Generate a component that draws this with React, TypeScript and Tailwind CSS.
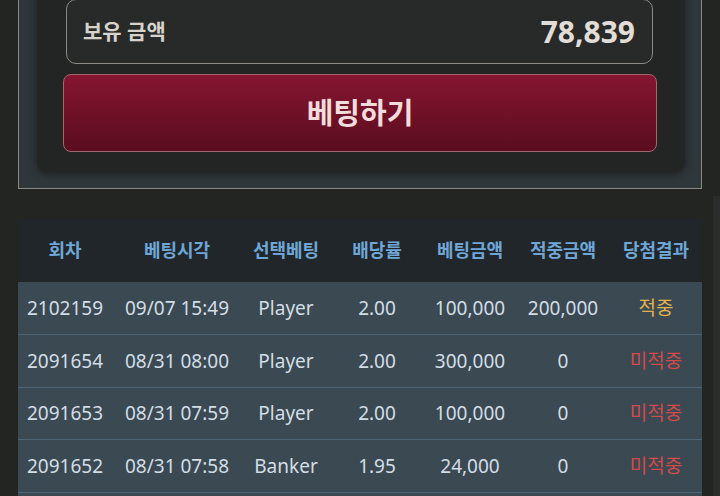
const rows = [
  { round: "2102159", time: "09/07 15:49", pick: "Player", odds: "2.00", bet: "100,000", win: "200,000", hit: true },
  { round: "2091654", time: "08/31 08:00", pick: "Player", odds: "2.00", bet: "300,000", win: "0", hit: false },
  { round: "2091653", time: "08/31 07:59", pick: "Player", odds: "2.00", bet: "100,000", win: "0", hit: false },
  { round: "2091652", time: "08/31 07:58", pick: "Banker", odds: "1.95", bet: "24,000", win: "0", hit: false },
];

const headers = ["회차", "베팅시각", "선택베팅", "배당률", "베팅금액", "적중금액", "당첨결과"];
const widths = [94, 130, 88, 94, 92, 94, 92];

const App = () => {
  return (
    <div
      className="relative h-[496px] w-[720px] overflow-hidden bg-[#232523]"
      style={{ fontFamily: '"Noto Sans", "Noto Sans CJK KR", sans-serif' }}
    >
      {/* scroll strip */}
      <div className="absolute right-0 top-[196px] h-[300px] w-[7px] bg-[#2b2d2c]" />

      <div className="ml-[18px] w-[684px]">
        {/* bet panel */}
        <div className="-mt-[42px] border border-[#8a8882] bg-[#30373a] pb-[16px] pl-[18px] pr-[16px] pt-[18px]">
          <div className="rounded-[10px] bg-[#222524] pb-[20px] pl-[26px] pr-[28px] pt-[22px] shadow-[0_2px_8px_rgba(0,0,0,0.45)]">
            <div className="ml-[3px] mr-[4px] flex h-[65px] items-center justify-between rounded-[10px] border border-[#8c8984] bg-[#282a29] pl-[16px] pr-[17px]">
              <span className="text-[21px] font-bold text-[#d8d2cc]">보유 금액</span>
              <span className="text-[30px] font-bold text-[#e2ddd7]">78,839</span>
            </div>
            <button className="mt-[10px] flex h-[78px] w-full items-center justify-center rounded-[8px] border border-[#a4666e] bg-gradient-to-b from-[#861530] to-[#5a0d1f] text-[29px] font-bold text-[#f2dcdc]">
              베팅하기
            </button>
          </div>
        </div>

        {/* history table */}
        <table className="mt-[29px] w-[684px] table-fixed border-collapse">
          <colgroup>
            {widths.map((w, i) => (
              <col key={i} style={{ width: w }} />
            ))}
          </colgroup>
          <thead>
            <tr className="h-[64px] bg-[#20262a]">
              {headers.map((h) => (
                <th key={h} className="text-center text-[18px] font-bold text-[#6fa6d6]">
                  {h}
                </th>
              ))}
            </tr>
          </thead>
          <tbody>
            {rows.map((r) => (
              <tr key={r.round} className="h-[52.5px] border-b border-[#4d6474] bg-[#3a4952] text-[19px] text-[#d3dde6]">
                <td className="text-center">{r.round}</td>
                <td className="text-center">{r.time}</td>
                <td className="text-center">{r.pick}</td>
                <td className="text-center">{r.odds}</td>
                <td className="text-center">{r.bet}</td>
                <td className="text-center">{r.win}</td>
                <td className={r.hit ? "text-center text-[#e3b24f]" : "text-center text-[#d44a4a]"}>
                  {r.hit ? "적중" : "미적중"}
                </td>
              </tr>
            ))}
            <tr className="h-[52.5px] bg-[#3a4952]">
              <td colSpan={7} />
            </tr>
          </tbody>
        </table>
      </div>
    </div>
  );
};

export default App;
